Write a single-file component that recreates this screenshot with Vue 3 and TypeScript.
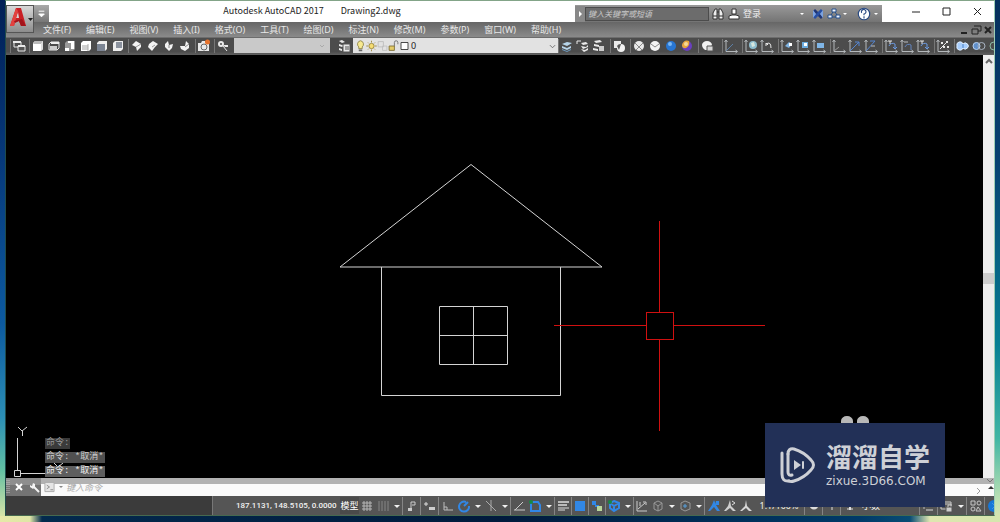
<script setup lang="ts">
import { ref } from 'vue'

interface Shape { d: string; f?: string; s?: string; w?: number }
interface Tool { icon: string; label: string }

const L = '#e9e9e9'
const M = '#b9bcc0'
const B = '#3187e6'
const axes = (c = '#b4b8bb'): Shape => ({ d: 'M3 2.500V13.500H14M1.500 4L3 2L4.500 4M12.500 12L14.500 13.500L12.500 15', s: c })

const icons: Record<string, Shape[]> = {
  named: [{ d: 'M3 4H10V9H3Z', s: L }, { d: 'M2 3H10V5H2Z', f: L }, { d: 'M7 8H14V13H7Z', f: '#555', s: L }, { d: 'M7 7H14V9H7Z', f: L }],
  top: [{ d: 'M5 3H13V11L11 13H3V5Z', f: '#fff' }, { d: 'M5 3H13L11 6H3Z', f: '#bbb' }, { d: 'M11 6L13 3V11L11 13Z', f: '#ddd' }],
  bottom: [{ d: 'M5 4H13V10L11 12H3V6Z', s: L }, { d: 'M4 8H11V12H4Z', f: '#ccc' }, { d: 'M5 4H13V6H5Z', f: '#eee' }],
  left: [{ d: 'M5 3H13V11L11 13H3V5Z', f: '#999' }, { d: 'M6 3H12V11H9V5H6ZM3 10H7V13H3Z', f: '#fff' }],
  right: [{ d: 'M5 3H13V11L11 13H3V5Z', f: '#fff' }, { d: 'M4 7H10V12H4Z', f: '#d0d0d0' }, { d: 'M10 6V13', s: '#aaa' }],
  front: [{ d: 'M5 3H13V11L11 13H3V5Z', f: '#eee' }, { d: 'M3 6H11V13H3Z', f: '#7c8594' }],
  back: [{ d: 'M5 3H13V11L11 13H3V5Z', f: '#eee' }, { d: 'M6 4H12V10H6Z', f: '#8b929e' }],
  iso1: [{ d: 'M7 3L12 6L12 9L8 13L7 9L3 7Z', f: '#f3f3f3' }, { d: 'M7 9L12 6', s: '#999' }],
  iso2: [{ d: 'M8 3L13 6L10 9L7 13L3 9L4 6Z', f: '#f3f3f3' }, { d: 'M7 9L10 7', s: '#999' }],
  iso3: [{ d: 'M7 3L8 7L12 6L11 10L8 13L4 9L4 6Z', f: '#f3f3f3' }, { d: 'M8 7V10', s: '#888' }],
  iso4: [{ d: 'M9 3L12 6L12 10L8 13L4 11L3 8L8 8Z', f: '#f3f3f3' }, { d: 'M8 9L12 6', s: '#888' }],
  camera: [{ d: 'M2 5H5L6 3H9L10 5H13V13H2Z', f: L }, { d: 'M5 9A3 3 0 1 0 11 9A3 3 0 1 0 5 9', s: '#666' }, { d: 'M9 4A2.500 2.500 0 1 0 14 4A2.500 2.500 0 1 0 9 4', f: '#e8732c' }],
  key: [{ d: 'M4 6A2 2 0 1 0 8 6A2 2 0 1 0 4 6', s: L, w: 2 }, { d: 'M8 8L12 13', s: L }, { d: 'M8 7H13V9H10', f: L }],
  layers: [{ d: 'M2 3L5 2L8 4L5 5ZM2 6L5 7L8 6V8L5 9L2 8ZM2 10L5 11V13L2 12Z', f: L }, { d: 'M6 6H13V14H6Z', f: '#e8e8e8', s: '#555' }, { d: 'M8 9H12M8 11H12', s: '#555' }],
  bulb: [{ d: 'M8 2A4 4 0 0 1 10 9V11H6V9A4 4 0 0 1 8 2Z', f: '#f7e990', s: '#8d8447' }, { d: 'M6 13H10', s: '#666', w: 2 }],
  sun: [{ d: 'M5 8A3 3 0 1 0 11 8A3 3 0 1 0 5 8', f: '#f6dd72', s: '#97833a' }, { d: 'M8 2V4M8 12V14M2 8H4M12 8H14M4 4L5 5M11 11L12 12M12 4L11 5M4 12L5 11', s: '#97833a' }],
  freeze: [{ d: 'M3 3H9V9H3Z', s: '#bbb' }, { d: 'M8 8H13V13H8Z', s: '#c0c0c0' }],
  lock: [{ d: 'M3 8H9V13H3Z', f: '#e4cc69', s: '#7b6d32' }, { d: 'M9 8V4A2 2 0 0 1 13 4V6', s: '#6d6d6d' }],
  swatch: [{ d: 'M4 4H12V12H4Z', f: '#fff', s: '#333' }],
  stackBlue: [{ d: 'M3 6L8 4L13 5L8 8ZM3 8L8 10L12 8V10L8 12L3 10Z', f: '#b7d4e9' }, { d: 'M3 11L8 13L12 11V12L8 14L3 12Z', f: '#6f9cc1' }],
  stackPrev: [{ d: 'M2 3H6M2 3V6', s: L }, { d: 'M6 5L11 4L13 6L8 7ZM6 8L11 9L13 7V9L8 11ZM6 11L10 12L13 10V12L9 14Z', f: L }],
  stackState: [{ d: 'M3 3L9 2L11 4L5 5ZM3 6L8 7V9L3 8ZM2 10L7 11V13L2 12Z', f: L }, { d: 'M8 8H13V13H8Z', f: '#ccc' }],
  hide: [{ d: 'M3 3H10V10H3Z', f: L }, { d: 'M6 10A4 4 0 1 0 14 10A4 4 0 1 0 6 10', f: '#f2f2f2' }, { d: 'M6 8A4 4 0 0 1 10 6L8 12Z', f: '#555' }],
  wire: [{ d: 'M3 8A5 5 0 1 0 13 8A5 5 0 1 0 3 8', f: '#e9e9e9' }, { d: 'M4 5L8 9L12 5M5 12L8 9L11 12', s: '#8a8a8a' }],
  hidden: [{ d: 'M3 8A5 5 0 1 0 13 8A5 5 0 1 0 3 8', f: '#f4f4f4' }, { d: 'M4 6L8 9L12 6', s: '#8a8a8a' }],
  real: [{ d: 'M3 8A5 5 0 1 0 13 8A5 5 0 1 0 3 8', f: '#2876d2' }, { d: 'M5 6A2 2 0 1 0 9 6A2 2 0 1 0 5 6', f: '#79b7f5' }],
  concept: [{ d: 'M3 8A5 5 0 1 0 13 8A5 5 0 1 0 3 8', f: '#6a3fc0' }, { d: 'M3 8A5 5 0 0 1 10 3A6 6 0 0 1 7 10Q4 11 3 8', f: '#e9a63b' }, { d: 'M5 6A2 2 0 1 0 9 6A2 2 0 1 0 5 6', f: '#f6d898' }],
  styles: [{ d: 'M3 7A5 4 0 0 1 13 7L9 12A5 5 0 0 1 3 7', f: '#f1f1f1' }, { d: 'M8 8H14V13H8Z', f: '#d5d5d5', s: '#555' }],
  ucs: [axes(), { d: 'M3 13L10 6', s: '#5c7fa6' }],
  ucsWorld: [axes(), { d: 'M6 7A4 4 0 1 0 14 7A4 4 0 1 0 6 7', f: '#8ebed0' }, { d: 'M8 5L11 4L12 8L9 9Z', f: '#d6e7df' }],
  ucsPrev: [axes(), { d: 'M7 5L9 7M7 5V8M7 6Q12 3 12 10', s: L }],
  ucsFace: [axes(), { d: 'M6 8L10 4L13 6L10 10Z', f: '#7fb2df' }, { d: 'M10 5H13V8H10Z', f: '#fff' }],
  ucsObj: [axes(), { d: 'M7 4H13V10H7Z', f: '#6cacdf' }, { d: 'M9 5H12V8H9Z', f: '#fff' }],
  ucsView: [axes(), { d: 'M6 5H13V10H6Z', f: '#7fb5e6' }],
  ucsOrigin: [axes(), { d: 'M3 13L8 9', s: '#999' }],
  ucsZ: [axes(), { d: 'M3 13L12 4M8 4H12V8', s: '#5485d1' }],
  ucs3: [axes(), { d: 'M3 13L12 3M7 3H12', s: '#5485d1' }, { d: 'M8 8H12', s: M }],
  ucsX: [axes(), { d: 'M6 8A4 4 0 0 1 12 6V11M10 9L12 11L14 9', s: '#6b9ae2' }, { d: 'M5 3H9M7 3V6', s: L }],
  ucsY: [axes(), { d: 'M6 9A4 4 0 0 1 12 7V12', s: '#6384bd' }, { d: 'M5 4H9', s: M }],
  ucsApply: [axes(), { d: 'M6 4H8V6H6ZM11 3H13V5H11ZM8 8H10V10H8ZM12 8H14V10H12Z', f: L }, { d: 'M5 11L12 4', s: L }],
  union: [{ d: 'M2 8A3 3 0 0 1 8 6A3 3 0 1 1 8 10A3 3 0 0 1 2 8', f: '#a7cdfb', s: '#e0efff' }, { d: 'M8 6V10', s: '#4680c8' }],
  subtract: [{ d: 'M2 8A3 3 0 1 0 9 8A3 3 0 1 0 2 8', f: '#608fca', s: '#b8d3f3' }, { d: 'M7 8A3 3 0 1 0 14 8A3 3 0 1 0 7 8', s: '#a9b4c2' }],
  intersect: [{ d: 'M3 8A4 4 0 1 0 11 8A4 4 0 1 0 3 8', s: '#8bb8a4' }],
  grid: [{ d: 'M5 3V13M8 3V13M11 3V13M3 5H13M3 8H13M3 11H13', s: '#b6b6b6' }],
  snap: [{ d: 'M4 3V13M7 3V13M10 3V13M13 3V13', s: '#878787' }],
  infer: [{ d: 'M7 12V4H11V7H8', s: '#ccc' }, { d: 'M4 10H8V13H4Z', f: '#ccc' }],
  dyn: [{ d: 'M2 6H6M4 4V8', s: '#ddd' }, { d: 'M7 9H13V12H7Z', f: '#ccc' }],
  ortho: [{ d: 'M4 4V12H13M4 9H7V12', s: '#bdbdbd' }],
  polar: [{ d: 'M13 8A5 5 0 1 1 10 4M8 8L12 4', s: B, w: 2 }],
  iso: [{ d: 'M3 3L13 13M8 2V13', s: '#aaa' }],
  track: [{ d: 'M3 12H14M4 12L12 4', s: '#ccc' }],
  osnap: [{ d: 'M4 4H11L13 7V13H4Z', s: B, w: 2 }, { d: 'M2 4A2 2 0 1 0 6 4A2 2 0 1 0 2 4', f: '#168a43' }],
  weight: [{ d: 'M3 4H14M3 7H12', s: '#bbb', w: 2 }, { d: 'M3 10H14M3 12H10', s: '#ddd' }],
  trans: [{ d: 'M3 3H13V13H3Z', f: B }],
  cycle: [{ d: 'M3 3H7V7H3ZM6 7H10V9H6Z', f: B }, { d: 'M8 8H13V13H8Z', f: '#b9d69b' }],
  osnap3: [{ d: 'M8 3L13 5V10L8 13L4 10V5ZM4 5L8 8L13 5M8 8V13', s: B, w: 2 }, { d: 'M2 4A2 2 0 1 0 6 4A2 2 0 1 0 2 4', f: '#168a43' }],
  ducs: [{ d: 'M3 3V13H13M4 11L11 5M9 4H12V7M6 4V8', s: '#ccc' }],
  cube: [{ d: 'M8 3L12 5V11L8 13L4 11V5ZM4 5L8 8L12 5M8 8V13', s: '#999' }],
  gizmo: [{ d: 'M8 3L13 5V11L8 13L4 11V5Z', s: '#999' }, { d: 'M6 8H10M8 6V10', s: '#57a1df' }],
  anno: [{ d: 'M8 2L10 7L14 13L11 13L8 9L4 13L2 13L6 7Z', f: B }, { d: 'M10 3H13V7H9Z', f: B }],
  annoAuto: [{ d: 'M8 2L9 8L14 13L11 13L8 10L4 13L2 13L6 8Z', f: '#cfcfcf' }, { d: 'M10 3L13 5L10 7', s: '#ddd' }],
  annoScale: [{ d: 'M8 2L9 8L14 13L11 13L8 10L4 13L2 13L7 8Z', f: '#d8d8d8' }],
  gear: [{ d: 'M5 7A3 3 0 1 0 11 7A3 3 0 1 0 5 7', s: '#ddd', w: 3 }],
  plus: [{ d: 'M8 3V12M4 7H12', s: '#ddd' }],
  monitor: [{ d: 'M8 3V12', s: '#ddd', w: 2 }, { d: 'M5 11H11', s: '#ddd' }],
  lockUi: [{ d: 'M3 11V5H13V9', s: '#bbb' }, { d: 'M5 12H12', s: '#ddd' }],
  lockWin: [{ d: 'M2 4H12V11H2ZM2 6H12', s: '#ccc' }, { d: 'M7 9H13V14H7Z', f: '#ccc', s: '#555' }, { d: 'M9 9V7H13', s: '#ccc' }],
  isolate: [{ d: 'M3 3H7V7H3ZM10 9L13 13H8ZM9 5A2 2 0 1 0 13 5A2 2 0 1 0 9 5M3 11A2 2 0 1 0 7 11A2 2 0 1 0 3 11', s: '#c5c5c5' }],
  accel: [{ d: 'M2 8A6 6 0 1 0 14 8A6 6 0 1 0 2 8', f: '#1677d8' }, { d: 'M6 5L9 8L6 11', s: '#3b93e6' }],
  find: [{ d: 'M3 13V7L5 3H7V13ZM9 13V3H11L13 7V13ZM7 6H9', s: '#333', f: '#eee' }, { d: 'M3 10H7M9 10H13', s: '#333' }],
  user: [{ d: 'M6 3H10V8H6Z', f: '#fff', s: '#333' }, { d: 'M3 13V10L6 9H10L13 10V13Z', f: '#fff', s: '#333' }],
  exchange: [{ d: 'M4 4L12 12', s: '#1f3575', w: 3 }, { d: 'M12 4L4 12', s: '#274fa4', w: 3 }, { d: 'M3 4V12L6 8ZM13 4V12L10 8Z', f: '#7ba3e2' }],
  a360: [{ d: 'M8 4L4 11H12Z', s: '#27508c' }, { d: 'M6 3H10V6H6ZM2 9H6V12H2ZM10 9H14V12H10Z', f: '#eef4ff', s: '#27508c' }],
  help: [{ d: 'M3 8A5 5 0 1 0 13 8A5 5 0 1 0 3 8', f: '#fff', s: '#284982' }, { d: 'M6 7A2 2 0 1 1 8 8V9M8 10V12', s: '#284982' }],
  arrow: [{ d: 'M5 7H11L8 10Z', f: '#f2f2f2' }],
  min: [{ d: 'M4 8H12', s: '#222' }],
  max: [{ d: 'M4 4H11V11H4Z', s: '#222' }],
  close: [{ d: 'M4 4L11 11M11 4L4 11', s: '#222' }],
  docMin: [{ d: 'M5 11H11', s: '#222', w: 2 }],
  docMax: [{ d: 'M6 4H13V9H10M4 7H10V12H4Z', s: '#222' }],
  docClose: [{ d: 'M5 5L11 11M11 5L5 11', s: '#222', w: 2 }],
  wrench: [{ d: 'M7 7L13 13', s: '#f4f4f4', w: 2 }, { d: 'M4 6L6 7L7 4L9 5V8L7 10L4 8Z', f: '#f4f4f4' }],
  closeW: [{ d: 'M5 5L11 11M11 5L5 11', s: '#fff', w: 2 }],
  prompt: [{ d: 'M3 3H13V13H3Z', f: '#e5e5e5', s: '#aaa' }, { d: 'M5 6L8 8L5 10M9 11H12', s: '#888' }],
  chevron: [{ d: 'M5 7L8 10L11 7', s: '#666' }],
}

const t = (icon: string, label: string): Tool => ({ icon, label })
const viewGroups: Tool[][] = [
  [t('named', '命名视图')],
  [t('top', '俯视'), t('bottom', '仰视'), t('left', '左视'), t('right', '右视'), t('front', '前视'), t('back', '后视')],
  [t('iso1', '西南等轴测'), t('iso2', '东南等轴测'), t('iso3', '东北等轴测'), t('iso4', '西北等轴测')],
  [t('camera', '创建相机')],
  [t('key', '上一个视图')],
]
const layerStates = ['bulb', 'sun', 'freeze', 'lock', 'swatch']
const toolGroups: Tool[][] = [
  [t('stackBlue', '置为当前'), t('stackPrev', '上一个图层'), t('stackState', '图层状态')],
  [t('hide', '二维线框')],
  [t('wire', '线框'), t('hidden', '消隐'), t('real', '真实'), t('concept', '概念')],
  [t('styles', '管理视觉样式')],
  [t('ucs', 'UCS')],
  [t('ucsWorld', '世界'), t('ucsPrev', '上一个 UCS')],
  [t('ucsFace', '面 UCS'), t('ucsObj', '对象'), t('ucsView', '视图')],
  [t('ucsOrigin', '原点'), t('ucsZ', 'Z 轴矢量'), t('ucs3', '三点')],
  [t('ucsX', 'X'), t('ucsY', 'Y'), t('ucsX', 'Z')],
  [t('ucsApply', '应用')],
  [t('union', '并集'), t('subtract', '差集'), t('intersect', '交集')],
]
const menus = ['文件(F)', '编辑(E)', '视图(V)', '插入(I)', '格式(O)', '工具(T)', '绘图(D)', '标注(N)', '修改(M)', '参数(P)', '窗口(W)', '帮助(H)']
const infoTools: Tool[] = [t('exchange', 'Exchange'), t('a360', 'A360')]
const statusMain = ['grid', 'snap', 'arrow', '|', 'infer', '|', 'dyn', '|', 'ortho', 'polar', 'arrow', 'iso', 'arrow', '/', 'track', 'osnap', 'arrow', '/', 'weight', '/', 'trans', '/', 'cycle', '/', 'osnap3', 'arrow', '/', 'ducs', 'cube', 'arrow', 'gizmo', 'arrow', '|', 'anno', 'annoAuto', 'annoScale']
const statusUnits = ['|', 'gear', '|', 'plus', '|', 'monitor']
const statusEnd = ['|', 'lockUi', '|', 'lockWin', 'arrow', '|', 'isolate', '|', 'accel']
const history = ['命令:', '命令: *取消*', '命令: *取消*']
const keyword = ref('')
const command = ref('')
const layer = ref('0')
const view = ref('')
</script>

<template>
  <div class="desktop">
    <main class="window">
      <header class="head">
        <div class="titlebar">
          <button class="quick" aria-label="自定义快速访问工具栏">
            <svg class="ico" viewBox="0 0 16 16"><path d="M5 5H11M5 8H11L8 11Z" fill="#fff" stroke="#fff" /></svg>
          </button>
          <h1 class="title"><span>Autodesk AutoCAD 2017</span><span>Drawing2.dwg</span></h1>
          <div class="info">
            <button class="expand" aria-label="展开搜索">
              <svg class="slim" viewBox="0 0 10 16"><path d="M4 5L7 8L4 11Z" fill="#fff" /></svg>
            </button>
            <input v-model="keyword" class="search" aria-label="搜索" placeholder="键入关键字或短语">
            <button class="tool" aria-label="查找">
              <svg class="ico" viewBox="0 0 16 16"><path v-for="(p, i) in icons.find" :key="i" :d="p.d" :fill="p.f || 'none'" :stroke="p.s || 'none'" :stroke-width="p.w || 1" /></svg>
            </button>
            <button class="login">
              <svg class="ico" viewBox="0 0 16 16"><path v-for="(p, i) in icons.user" :key="i" :d="p.d" :fill="p.f || 'none'" :stroke="p.s || 'none'" :stroke-width="p.w || 1" /></svg>
              登录
            </button>
            <svg class="ico push" viewBox="0 0 16 16"><path d="M6 7H10L8 9Z" fill="#fff" /></svg>
            <button v-for="b in infoTools" :key="b.icon" class="tool" :aria-label="b.label">
              <svg class="ico" viewBox="0 0 16 16"><path v-for="(p, i) in icons[b.icon]" :key="i" :d="p.d" :fill="p.f || 'none'" :stroke="p.s || 'none'" :stroke-width="p.w || 1" /></svg>
            </button>
            <svg class="slim" viewBox="0 0 10 16"><path d="M1 7H5L3 9Z" fill="#fff" /></svg>
            <button class="tool help" aria-label="帮助">
              <svg class="ico" viewBox="1 1 14 14"><path v-for="(p, i) in icons.help" :key="i" :d="p.d" :fill="p.f || 'none'" :stroke="p.s || 'none'" :stroke-width="p.w || 1" /></svg>
            </button>
            <svg class="slim" viewBox="0 0 10 16"><path d="M2 7H6L4 9Z" fill="#fff" /></svg>
          </div>
          <div class="controls">
            <button v-for="c in ['min', 'max', 'close']" :key="c" class="tool" :aria-label="c">
              <svg class="ico" viewBox="0 0 16 16"><path v-for="(p, i) in icons[c]" :key="i" :d="p.d" :fill="p.f || 'none'" :stroke="p.s || 'none'" /></svg>
            </button>
          </div>
        </div>
        <nav class="menubar">
          <button v-for="m in menus" :key="m" class="menu">{{ m }}</button>
          <div class="doc">
            <button v-for="c in ['docMin', 'docMax', 'docClose']" :key="c" class="tool small" :aria-label="c">
              <svg class="ico" viewBox="0 0 16 16"><path v-for="(p, i) in icons[c]" :key="i" :d="p.d" fill="none" :stroke="p.s" :stroke-width="p.w || 1" /></svg>
            </button>
          </div>
        </nav>
        <button class="logo" aria-label="应用程序菜单">
          <svg viewBox="0 0 27 28" width="27" height="28">
            <path d="M3 20L9 2H14L19 20H14L12 15L8 16L7 20Z" fill="#c81e24" />
            <path d="M9 12L11 6L12 12Z" fill="#d8d2d2" />
            <path d="M3 20L9 2L11 5L7 20Z" fill="#e2413f" />
            <path d="M7 15L15 13L19 20H14L12 15L8 17Z" fill="#a3141b" />
            <path d="M21 12H26L23.500 15Z" fill="#222" />
          </svg>
        </button>
      </header>

      <div class="toolbar">
        <div v-for="(g, gi) in viewGroups" :key="gi" class="group">
          <button v-for="b in g" :key="b.label" class="tool" :aria-label="b.label">
            <svg class="ico" viewBox="0 0 16 16"><path v-for="(p, i) in icons[b.icon]" :key="i" :d="p.d" :fill="p.f || 'none'" :stroke="p.s || 'none'" :stroke-width="p.w || 1" /></svg>
          </button>
        </div>
        <div class="combo views">
          <select v-model="view" aria-label="视图"><option value=""></option></select>
          <svg class="ico" viewBox="0 0 16 16"><path d="M6 7L8 9L10 7" fill="none" stroke="#aaa" /></svg>
        </div>
        <button class="tool props" aria-label="图层特性">
          <svg class="ico" viewBox="0 0 16 16"><path v-for="(p, i) in icons.layers" :key="i" :d="p.d" :fill="p.f || 'none'" :stroke="p.s || 'none'" /></svg>
        </button>
        <div class="combo layer">
          <svg v-for="s in layerStates" :key="s" class="state" viewBox="2 0 12 16"><path v-for="(p, i) in icons[s]" :key="i" :d="p.d" :fill="p.f || 'none'" :stroke="p.s || 'none'" :stroke-width="p.w || 1" /></svg>
          <select v-model="layer" aria-label="图层"><option value="0">0</option></select>
          <svg class="state" viewBox="2 0 12 16"><path v-for="(p, i) in icons.chevron" :key="i" :d="p.d" fill="none" :stroke="p.s" /></svg>
        </div>
        <div class="docked">
          <div v-for="(g, gi) in toolGroups" :key="gi" class="group" :class="{ grip: g[0].icon === 'ucs' }">
            <button v-for="b in g" :key="b.label" class="tool" :aria-label="b.label">
              <svg class="ico" viewBox="0 0 16 16"><path v-for="(p, i) in icons[b.icon]" :key="i" :d="p.d" :fill="p.f || 'none'" :stroke="p.s || 'none'" :stroke-width="p.w || 1" /></svg>
            </button>
          </div>
        </div>
      </div>

      <section class="work">
        <div class="model">
          <svg class="drawing" viewBox="6 55 977 423" preserveAspectRatio="xMidYMid meet" fill="none" stroke="#d4d4d4">
            <path d="M340 267L471 164.500L602 267Z" />
            <path d="M381.500 267V395.500H560.500V267M439.500 306.500H507.500V364.500H439.500ZM473.500 306V364M439 335.500H507" />
            <g fill="#d01010" stroke="none">
              <rect x="659" y="221" width="1" height="91" />
              <rect x="659" y="340" width="1" height="91" />
              <rect x="554" y="325" width="92" height="1" />
              <rect x="674" y="325" width="91" height="1" />
            </g>
            <rect x="646.500" y="312.500" width="27" height="27" stroke="#d01010" />
            <path d="M17.500 438V470M20 473.500H62M14.500 470.500H20.500V476.500H14.500ZM18 427L22 431L27 427M22.500 431V436M54 463L58 467L63 463" />
            <path d="M841 424V421A6 5 0 0 1 853 421V424ZM857 424V421A6 5 0 0 1 869 421V424Z" fill="#b8b8b8" stroke="none" />
          </svg>
          <ol class="history">
            <li v-for="(h, i) in history" :key="i"><span>{{ h }}</span></li>
          </ol>
        </div>
        <div class="vscroll">
          <svg class="chev" viewBox="0 0 11 14"><path d="M3 8L6 5L9 8" fill="none" stroke="#666" stroke-width="2" /></svg>
          <i class="thumb"></i>
        </div>
      </section>

      <section class="command">
        <div class="cmdtools">
          <svg class="handle" viewBox="0 0 5 16"><path d="M1 1V15M3 1V15" stroke="#bbb" stroke-dasharray="1 1" /></svg>
          <button v-for="c in ['closeW', 'wrench']" :key="c" class="tool" :aria-label="c">
            <svg class="ico" viewBox="0 0 16 16"><path v-for="(p, i) in icons[c]" :key="i" :d="p.d" :fill="p.f || 'none'" :stroke="p.s || 'none'" :stroke-width="p.w || 1" /></svg>
          </button>
        </div>
        <div class="cmdline">
          <svg class="state" viewBox="2 2 12 12"><path v-for="(p, i) in icons.prompt" :key="i" :d="p.d" :fill="p.f || 'none'" :stroke="p.s" /></svg>
          <svg class="slim" viewBox="0 0 10 16"><path d="M4 7H8L6 9Z" fill="#888" /></svg>
          <input v-model="command" aria-label="命令" placeholder="键入命令">
          <svg class="ends" viewBox="0 0 24 18"><path d="M7 10L10 13L7 16" fill="none" stroke="#999" /><path d="M17 1L20 4L23 1" fill="none" stroke="#777" /><path d="M18 11H24L21 8Z" fill="#333" /></svg>
        </div>
      </section>

      <footer class="status">
        <div class="tabs"></div>
        <div class="bar">
          <span class="coords">187.1131, 148.5105, 0.0000</span>
          <button class="modelbtn">模型</button>
          <template v-for="(s, si) in statusMain" :key="si">
            <i v-if="s === '|'" class="sep"></i>
            <i v-else-if="s === '/'" class="sep thin"></i>
            <button v-else class="tool" :class="{ drop: s === 'arrow' }" :aria-label="s">
              <svg class="ico" viewBox="0 0 16 16"><path v-for="(p, i) in icons[s]" :key="i" :d="p.d" :fill="p.f || 'none'" :stroke="p.s || 'none'" :stroke-width="p.w || 1" /></svg>
            </button>
          </template>
          <button class="scale">1:1/100%</button>
          <template v-for="(s, si) in statusUnits" :key="'u' + si">
            <i v-if="s === '|'" class="sep"></i>
            <button v-else class="tool" :aria-label="s">
              <svg class="ico" viewBox="0 0 16 16"><path v-for="(p, i) in icons[s]" :key="i" :d="p.d" :fill="p.f || 'none'" :stroke="p.s || 'none'" :stroke-width="p.w || 1" /></svg>
            </button>
          </template>
          <button class="units">小数</button>
          <div class="tail">
            <template v-for="(s, si) in statusEnd" :key="si">
              <i v-if="s === '|'" class="sep"></i>
              <button v-else class="tool" :class="{ drop: s === 'arrow' }" :aria-label="s">
                <svg class="ico" viewBox="0 0 16 16"><path v-for="(p, i) in icons[s]" :key="i" :d="p.d" :fill="p.f || 'none'" :stroke="p.s || 'none'" :stroke-width="p.w || 1" /></svg>
              </button>
            </template>
          </div>
        </div>
      </footer>
    </main>

    <aside class="brand">
      <svg viewBox="0 0 36 38" width="36" height="38" fill="none" stroke="#ced0d6" stroke-width="3" stroke-linecap="round" stroke-linejoin="round">
        <path d="M2 7V28Q2 36 9 35" />
        <path d="M8 8V26Q8 30 12 29" />
        <path d="M8 8Q8 2 14 3Q24 6 31 14Q36 19 31 24Q24 32 14 35Q11 36 9 35" />
        <path d="M14 14V24L21 19Z" fill="#ced0d6" stroke="none" />
        <path d="M23 16V22" stroke-width="2" />
      </svg>
      <div class="words"><strong>溜溜自学</strong><span>zixue.3D66.COM</span></div>
    </aside>
  </div>
</template>

<style>
body { background: #021a3b; }
</style>

<style scoped>
* { box-sizing: border-box; }
.desktop {
  position: relative;
  display: flex;
  flex-direction: column;
  height: 100vh;
  padding: 0 5px 6px;
  overflow: hidden;
  font-family: "Noto Sans", "Noto Sans CJK SC", sans-serif;
  font-size: 9px;
  background:
    linear-gradient(90deg, #e6e9a8 0, #dfe6a6 30px, #032a4d 42px, #001a3c 50%, #003a68 86%, #084c74 91%, #dfe6b0 93%, #d5e6ae 100%) bottom / 100% 6px no-repeat,
    linear-gradient(#06305c 0, #063f70 30%, #067f94 66%, #41b6a4 84%, #bfe2b4 96%, #dfe6b0) right / 50% 100% no-repeat,
    linear-gradient(#001f55 0, #06387a 30%, #0c5aa0 62%, #2c8fb6 80%, #62bfa2 90%, #e6e9a8);
}
.window {
  display: flex;
  flex: 1;
  flex-direction: column;
  min-height: 0;
  overflow: hidden;
  border: 1px solid #1e4b4c;
  border-top-color: #83a488;
  border-right-color: #9ccdb4;
  border-bottom-color: #46694f;
  background: #000;
}
button, input, select { margin: 0; padding: 0; border: 0; background: none; color: inherit; font: inherit; }
svg { display: block; flex: none; }
.ico { width: 16px; height: 16px; }
.slim { width: 10px; height: 16px; }
.state { width: 11px; height: 14px; }
.tool { display: flex; flex: none; align-items: center; justify-content: center; width: 16px; height: 16px; overflow: hidden; }
.head { position: relative; flex: none; }
.logo {
  position: absolute;
  top: 4px;
  left: 0;
  width: 28px;
  height: 28px;
  border: 1px solid #555;
  background: linear-gradient(#d8d8d8, #8c8c8c);
}
.titlebar { display: flex; height: 21px; padding-left: 28px; background: #fff; }
.quick { align-self: flex-end; width: 15px; height: 17px; background: linear-gradient(#a9a9a9, #777); }
.quick .ico { width: 15px; }
.title {
  display: flex;
  flex: 1;
  gap: 17px;
  justify-content: center;
  margin: 0;
  color: #222;
  font-family: "Noto Sans CJK SC", sans-serif;
  font-size: 9px;
  font-weight: 400;
  line-height: 20px;
}
.info {
  display: flex;
  align-items: center;
  align-self: flex-end;
  width: 307px;
  height: 17px;
  background: linear-gradient(#999, #747474);
}
.expand { width: 10px; background: #888; }
.search { width: 124px; height: 14px; margin-right: 1px; padding: 0 2px; border: 1px solid #4c4c4c; background: #6c6c6c; color: #ddd; font-size: 8px; font-style: italic; }
.search::placeholder { color: #c9c9c9; opacity: 1; }
.login { display: flex; align-items: center; gap: 1px; color: #eee; }
.push { margin-left: auto; }
.help { margin-left: 4px; }
.controls { display: flex; align-items: center; justify-content: space-between; width: 112px; padding: 0 8px 0 26px; }
.menubar { display: flex; align-items: center; gap: 15px; height: 15px; padding-left: 37px; background: linear-gradient(#666, #8a8a8a); color: #e8e8e8; }
.menu { line-height: 14px; white-space: nowrap; }
.doc { display: flex; margin-left: auto; }
.doc .small { width: 12px; height: 14px; }
.toolbar {
  display: flex;
  flex: none;
  align-items: center;
  gap: 3px;
  height: 18px;
  padding: 0 0 2px 5px;
  overflow: hidden;
  border-top: 1px solid #6d6d6d;
  background: linear-gradient(#4c4c4c 0 80%, #606060);
}
.group { display: flex; flex: none; box-shadow: -2px 0 0 -1px #777; }
.docked { display: flex; flex: none; gap: 4px; }
.grip { margin-left: 4px; }
.combo { display: flex; flex: none; align-items: center; height: 15px; background: #c9c9c9; color: #222; }
.combo select { flex: 1; min-width: 0; appearance: none; font-size: 9px; }
.views { width: 96px; }
.props { margin-left: 4px; }
.layer { width: 205px; margin: 0 -2px 0 -3px; padding-left: 2px; background: #e2e2e2; }
.layer select { padding-left: 1px; }
.work { display: flex; flex: 1; min-height: 0; }
.model { position: relative; flex: 1; min-width: 0; }
.drawing { position: absolute; inset: 0; width: 100%; height: 100%; }
.history { position: absolute; bottom: 1px; left: 39px; display: flex; flex-direction: column; gap: 3px; margin: 0; padding: 0; list-style: none; line-height: 11px; }
.history li { display: flex; }
.history span { padding: 0 1px; background: rgba(110, 110, 110, .85); color: #eee; font-family: "Liberation Mono", "Noto Sans CJK SC", monospace; }
.history li:nth-child(1) span { background: #3a3a3a; color: #999; }
.history li:nth-child(2) span { background: #505050; color: #ccc; }
.vscroll { display: flex; flex-direction: column; width: 11px; background: #eee; }
.chev { width: 11px; height: 14px; }
.thumb { height: 11px; margin-top: 204px; background: #cdcdcd; }
.command { display: flex; flex: none; height: 18px; }
.cmdtools { display: flex; align-items: center; gap: 1px; width: 35px; background: linear-gradient(#8e8e8e 0 7px, #747474 7px); }
.cmdtools .tool { width: 14px; }
.handle { width: 5px; height: 16px; }
.cmdline { display: flex; flex: 1; align-items: center; padding-left: 3px; background: linear-gradient(#b2b2b2 0 6px, #fafafa 6px); }
.cmdline input { flex: 1; min-width: 0; padding-left: 1px; font-style: italic; }
.cmdline input::placeholder { color: #aaa; opacity: 1; }
.ends { width: 24px; height: 18px; }
.status { display: flex; flex: none; height: 19px; overflow: hidden; background: #555; }
.tabs { width: 207px; border-right: 1px solid #777; background: #3b3b3b; }
.bar { display: flex; flex: 1; align-items: center; min-width: 0; padding-left: 23px; color: #f2f2f2; }
.coords { width: 104px; font-family: Roboto, sans-serif; font-size: 8px; font-weight: 500; white-space: nowrap; }
.modelbtn { width: 19px; height: 17px; background: #4a4a4a; color: #fff; white-space: nowrap; }
.drop { width: 11px; }
.sep { flex: none; width: 2px; height: 18px; border-left: 1px solid #858585; }
.thin { width: 1px; }
.scale { width: 50px; white-space: nowrap; }
.units { width: 26px; }
.tail { display: flex; align-items: center; margin-left: auto; margin-right: -8px; }
.brand {
  position: absolute;
  right: 55px;
  bottom: 15px;
  display: flex;
  align-items: center;
  gap: 10px;
  width: 180px;
  height: 84px;
  padding-left: 15px;
  background: #223057;
  color: #ced0d6;
}
.words { display: flex; flex-direction: column; gap: 6px; white-space: nowrap; }
.words strong { font-family: "Noto Sans CJK SC", sans-serif; font-size: 26px; font-weight: 700; line-height: 26px; }
.words span { font-family: "DejaVu Sans", sans-serif; font-size: 12px; line-height: 12px; }
</style>
